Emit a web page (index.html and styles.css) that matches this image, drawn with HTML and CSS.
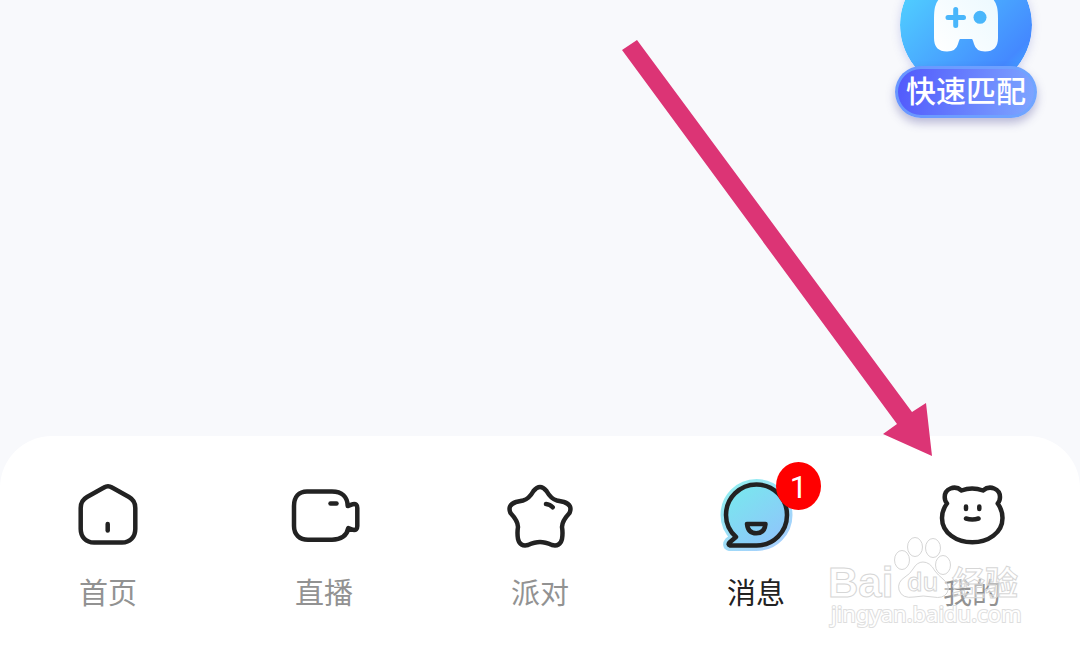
FILE: index.html
```html
<!DOCTYPE html>
<html lang="zh-CN">
<head>
<meta charset="utf-8">
<meta name="viewport" content="width=device-width, initial-scale=1">
<title>消息</title>
<link rel="stylesheet" href="styles.css">
</head>
<body>
<div class="screen">
  <main class="content">
    <button class="match" type="button">
      <svg class="match-disc" viewBox="0 0 132 132" aria-hidden="true">
        <defs>
          <linearGradient id="disc" gradientUnits="userSpaceOnUse" x1="0" y1="50" x2="97" y2="147">
            <stop offset="0" stop-color="#4fcaff"/>
            <stop offset="0.82" stop-color="#4489ff"/>
            <stop offset="0.9" stop-color="#4296ff"/>
          </linearGradient>
          <linearGradient id="pad" x1="0" y1="1" x2="1" y2="0.3">
            <stop offset="0" stop-color="#ffffff"/>
            <stop offset="1" stop-color="#eefaff"/>
          </linearGradient>
        </defs>
        <circle cx="66" cy="66" r="66" fill="url(#disc)"/>
        <path fill="url(#pad)" d="M50 36H82Q94 36 97 48Q98 52 98 60V79Q98 92.500 85 92.500Q76 92.500 74 85Q72.500 80 72 80H60Q59.500 80 58 85Q56 92.500 47 92.500Q34 92.500 34 79V60Q34 52 35 48Q38 36 50 36Z"/>
        <path d="M48 58.500H63.500M55.700 50.500V66.500" fill="none" stroke="#49b6fb" stroke-width="5" stroke-linecap="round"/>
        <circle cx="80" cy="58.300" r="6.500" fill="#49b6fb"/>
      </svg>
      <span class="match-label">快速匹配</span>
    </button>
  </main>

  <nav class="tabs">
    <a class="tab" href="#home">
      <span class="icon">
        <svg class="glyph" viewBox="0 0 72 72" aria-hidden="true">
          <path d="M32 7.500Q36 5 40 7.500L57 17Q63.300 20.500 63.300 28V49C63.300 57 58 62.600 50 62.600H22C14 62.600 8.700 57 8.700 49V28Q8.700 20.500 15 17Z"/>
          <path d="M35.700 44V50.500"/>
        </svg>
      </span>
      <span class="label">首页</span>
    </a>
    <a class="tab" href="#live">
      <span class="icon">
        <svg class="glyph" viewBox="0 0 72 72" aria-hidden="true">
          <path d="M19 11.500H44C54 11.500 59.500 17 59.700 26L65 24.200Q69.300 23.500 69.300 28V46Q69.300 50.500 65 49.800L60.300 48C59 55.500 53 59.700 44 59.700H20C11.500 59.700 6 54.500 6 46V26C6 17 11 11.500 19 11.500Z"/>
          <path d="M42.500 23.500H48.500"/>
        </svg>
      </span>
      <span class="label">直播</span>
    </a>
    <a class="tab" href="#party">
      <span class="icon">
        <svg class="glyph" viewBox="0 0 72 72" aria-hidden="true">
          <path d="M29.500 11Q36 3 42.500 11Q47 19 53 20.500L60 22Q69 25 65.500 33Q58 41 58 47Q59 53 58 59Q56 67 48 65Q41 62 36 62Q31 62 24 65Q16 67 14 59Q13 53 14 47Q14 41 6.500 33Q3 25 12 22L19 20.500Q25 19 29.500 11Z"/>
          <path d="M42 24Q46 24.300 48.700 27.300"/>
        </svg>
      </span>
      <span class="label">派对</span>
    </a>
    <a class="tab tab-active" href="#messages" aria-current="page">
      <span class="icon">
        <svg class="glyph" viewBox="0 0 72 72" aria-hidden="true">
          <defs>
            <linearGradient id="bubble" gradientUnits="userSpaceOnUse" x1="14" y1="8" x2="56" y2="64">
              <stop offset="0" stop-color="#79e7ee"/>
              <stop offset="1" stop-color="#8fc5fb"/>
            </linearGradient>
          </defs>
          <path class="halo" d="M16 57Q6 48 6 35A30.500 30.500 0 1 1 36.500 65.500H10Q7.500 65 9.500 62.500Z"/>
          <path fill="url(#bubble)" d="M16 57Q6 48 6 35A30.500 30.500 0 1 1 36.500 65.500H10Q7.500 65 9.500 62.500Z"/>
          <path d="M27 44H45.500Q44.500 53.300 36.200 53.300Q28 53.300 27 44Z"/>
        </svg>
        <span class="badge">1</span>
      </span>
      <span class="label">消息</span>
    </a>
    <a class="tab" href="#me">
      <span class="icon">
        <svg class="glyph" viewBox="0 0 72 72" aria-hidden="true">
          <path d="M25.500 10.500Q36 6.500 47 10.500C54 4.500 64 9 64 17Q64 21 61.700 23.500Q66.500 30 66.500 38C66.500 53 52 62.300 36.300 62.300S6 53 6 38Q6 30 11 23.500Q8.700 21 8.700 17C8.700 9 18.500 4.500 25.500 10.500Z"/>
          <path d="M30 26.500V29M43.300 26.500V29M30 38.500Q36.300 40.500 42.500 38.500"/>
        </svg>
      </span>
      <span class="label">我的</span>
    </a>
  </nav>

  <svg class="arrow" viewBox="0 0 310 416" aria-hidden="true">
    <path fill="#dc3475" d="M0 10L15 0L290 372L304 363L310 416L261 394L275 384Z"/>
  </svg>

  <svg class="watermark" viewBox="0 0 204 100" role="img" aria-label="Baidu 经验">
    <g class="mark">
      <ellipse cx="75" cy="29" rx="7.500" ry="9.500"/>
      <ellipse cx="88" cy="16" rx="7.500" ry="9.500"/>
      <ellipse cx="106" cy="17" rx="7.500" ry="9.500"/>
      <ellipse cx="116" cy="34" rx="7.500" ry="9.500"/>
      <path d="M96 31Q103 31 108 40Q111 44 116 48Q124 55 120 62Q116 68 106 66Q96 64 87 66Q75 68 72 59Q70 51 78 46Q83 43 86 38Q90 31 96 31Z"/>
    </g>
    <text class="mark-text mark-bai" x="1" y="66">Bai</text>
    <text class="mark-text mark-du" x="80" y="60">du</text>
    <text class="mark-text mark-cn" x="125" y="64">经验</text>
    <text class="mark-text mark-url" x="4" y="91">jingyan.baidu.com</text>
  </svg>
</div>
</body>
</html>
```
FILE: styles.css
```css
* {
  box-sizing: border-box;
}

body {
  margin: 0;
  background: #f8f9fc;
  font-family: "Liberation Sans", "Noto Sans CJK SC", sans-serif;
}

.screen {
  position: relative;
  display: flex;
  flex-direction: column;
  min-height: 100vh;
  overflow: hidden;
}

.content {
  flex: 1;
}

.match {
  position: absolute;
  top: -41px;
  right: 43px;
  display: flex;
  flex-direction: column;
  align-items: center;
  padding: 0;
  border: 0;
  background: none;
  font-family: inherit;
  cursor: pointer;
}

.match-disc {
  display: block;
  width: 132px;
  height: 132px;
  border-radius: 50%;
  box-shadow: 0 2px 10px rgba(90, 100, 200, 0.25);
}

.match-label {
  position: relative;
  margin-top: -25px;
  padding: 0 8px;
  border: 3px solid rgba(110, 165, 255, 0.8);
  border-radius: 26px;
  background: linear-gradient(100deg, #5057fc, #7fa8ff) border-box;
  box-shadow: 0 5px 10px rgba(70, 65, 150, 0.35);
  color: #ffffff;
  font-size: 30px;
  font-weight: 500;
  line-height: 46px;
  white-space: nowrap;
}

.tabs {
  display: grid;
  grid-template-columns: repeat(5, 1fr);
  padding: 44px 0 40px;
  border-radius: 52px 52px 0 0;
  background: #ffffff;
}

.tab {
  display: flex;
  flex-direction: column;
  align-items: center;
  gap: 24px;
  color: #929292;
  text-decoration: none;
}

.tab-active {
  color: #222222;
}

.icon {
  position: relative;
  width: 72px;
  height: 72px;
}

.glyph {
  display: block;
  width: 100%;
  height: 100%;
  overflow: visible;
  fill: none;
  stroke: #222222;
  stroke-width: 4.5;
  stroke-linecap: round;
  stroke-linejoin: round;
}

.halo {
  stroke: url(#bubble);
  stroke-width: 11;
  opacity: 0.8;
}

.label {
  font-size: 29px;
  line-height: 36px;
}

.badge {
  position: absolute;
  top: -18px;
  left: 56px;
  width: 45px;
  height: 48px;
  border-radius: 50%;
  background: #ff0000;
  color: #ffffff;
  font-family: Roboto, sans-serif;
  font-size: 31px;
  line-height: 52px;
  text-align: center;
}

.arrow {
  position: absolute;
  right: 148px;
  bottom: 196px;
  width: 310px;
  height: 416px;
}

.watermark {
  position: absolute;
  right: 49px;
  bottom: 21px;
  width: 204px;
  height: 100px;
  overflow: visible;
  pointer-events: none;
}

.mark,
.mark-text {
  fill: rgba(255, 255, 255, 0.4);
  stroke: #d6d6d6;
  stroke-width: 1;
}

.mark-bai {
  font-size: 42px;
  font-weight: 700;
}

.mark-du {
  font-family: "Open Sans", sans-serif;
  font-size: 25px;
  font-weight: 600;
}

.mark-cn {
  font-size: 33px;
  font-weight: 700;
}

.mark-url {
  fill: #ffffff;
  stroke: #dedede;
  stroke-width: 2;
  paint-order: stroke;
  font-family: "Noto Sans", sans-serif;
  font-size: 22px;
}
```
